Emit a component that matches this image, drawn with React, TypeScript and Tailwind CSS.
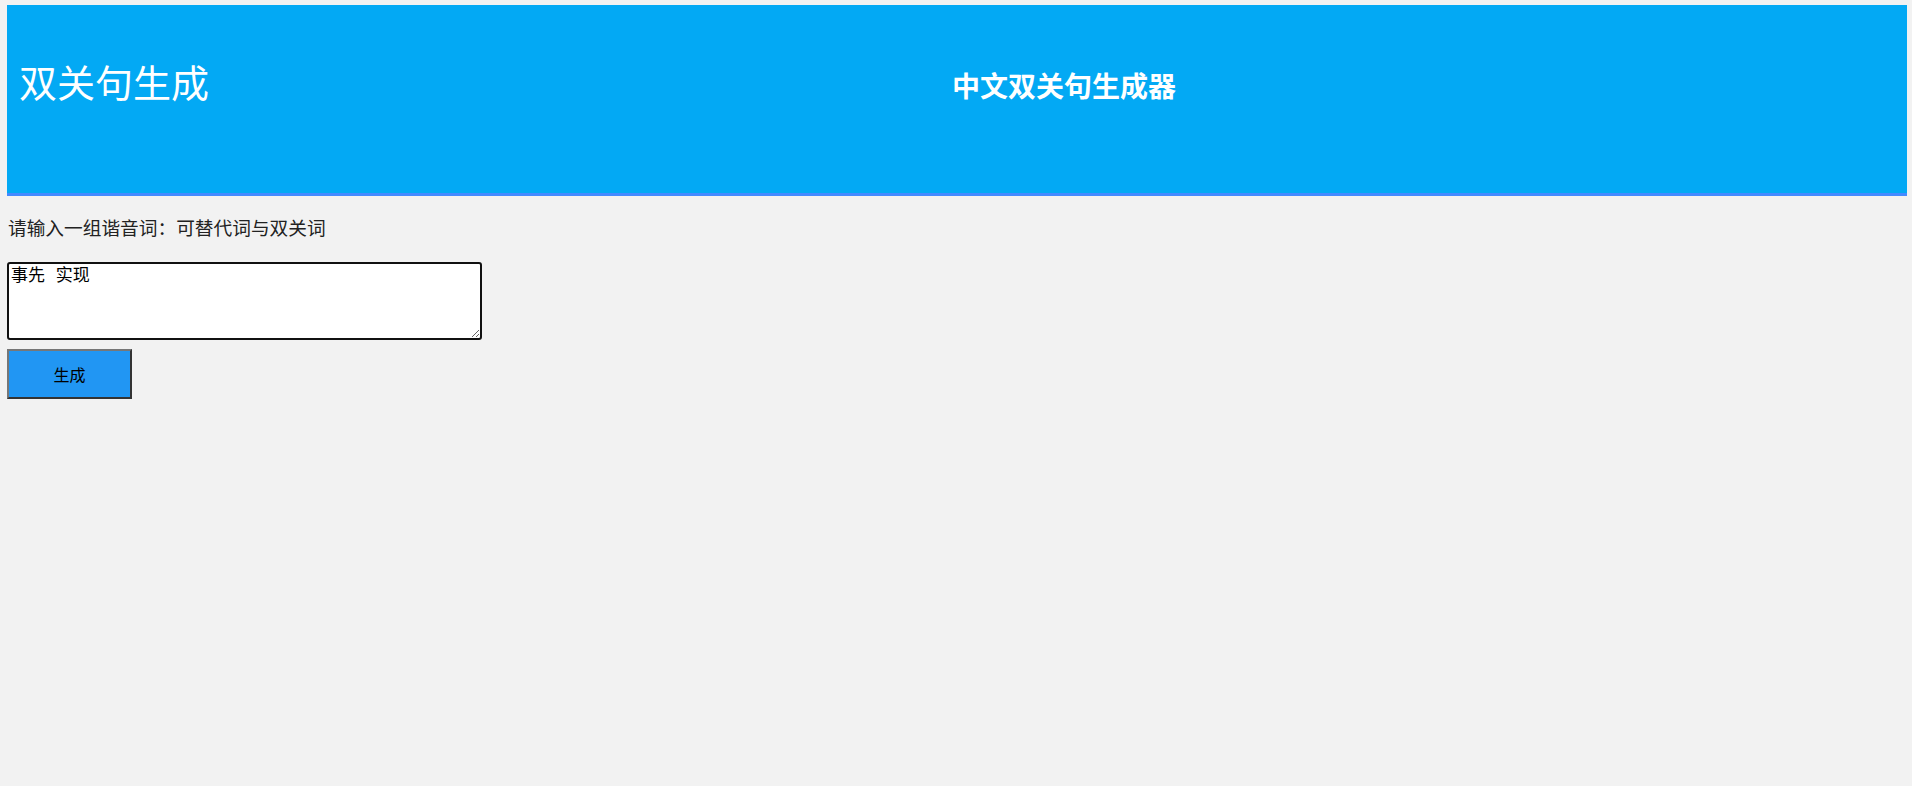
export default function App() {
  return (
    <div className="min-h-screen bg-[#f2f2f2] pt-[5px] pl-[7px] pr-[5px] font-['Noto_Sans_CJK_SC',sans-serif]">
      <Header />
      <PunForm />
    </div>
  )
}

function Header() {
  return (
    <div className="flex h-[191px] items-start bg-[#03a9f4] border-b-[3px] border-[#448aff] text-white">
      <h1 className="w-[214px] shrink-0 pl-[12px] mt-[57px] text-[38px] leading-none font-normal">
        双关句生成
      </h1>
      <h2 className="flex-1 mt-[66px] text-center text-[28px] leading-none font-bold">
        中文双关句生成器
      </h2>
    </div>
  )
}

function PunForm() {
  return (
    <div>
      <p className="mt-[22px] ml-[1px] text-[18.7px] leading-none text-[#222]">
        请输入一组谐音词：可替代词与双关词
      </p>
      <textarea
        className="block mt-[25px] w-[475px] h-[78px] bg-white border-2 border-[#111] rounded-[3px] px-[2px] pt-[1px] text-[17px] leading-none font-normal text-black font-['Noto_Sans_CJK_SC',monospace] [word-spacing:7px]"
        defaultValue="事先 实现"
      />
      <button className="block mt-[9px] w-[125px] h-[50px] bg-[#2196f3] border-2 border-t-[#777] border-l-[#777] border-b-[#333] border-r-[#333] text-[16px] text-black">
        生成
      </button>
    </div>
  )
}
